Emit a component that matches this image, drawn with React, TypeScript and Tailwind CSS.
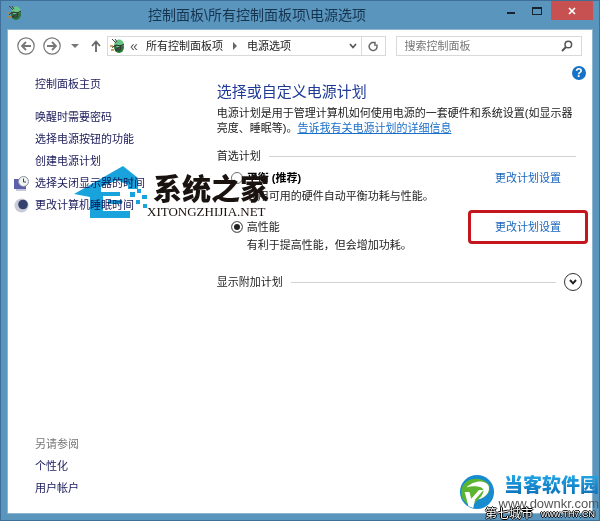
import type { ReactNode } from 'react';

const SIDE_LINKS = ['唤醒时需要密码', '选择电源按钮的功能', '创建电源计划'];

export default function App() {
  return (
    <div className="relative flex min-h-screen flex-col overflow-hidden border border-[#3f6f96] bg-[#5a95be] px-1.5 pb-1.5 font-['Liberation_Sans','Noto_Sans_CJK_SC',sans-serif] text-[11px] leading-4 text-[#222]">
      <TitleBar />
      <div className="flex flex-1 flex-col border border-[#8db5d0] bg-white">
        <Toolbar />
        <div className="flex flex-1">
          <Sidebar />
          <Content />
        </div>
      </div>
      <SiteMark />
      <CornerMark />
    </div>
  );
}

function TitleBar() {
  return (
    <header className="flex h-7 shrink-0 items-start">
      <div className="pt-1">
        <PowerIcon />
      </div>
      <h1 className="flex-1 pt-1 pr-2 text-center text-[14px] leading-5 text-[#15344e]">
        控制面板\所有控制面板项\电源选项
      </h1>
      <button type="button" aria-label="最小化" className="grid h-5 w-6 place-items-center">
        <span className="mt-1 h-0.5 w-2 bg-[#17242f]" />
      </button>
      <button type="button" aria-label="最大化" className="grid h-5 w-7 place-items-center">
        <span className="h-2 w-2.5 border border-t-2 border-[#17242f]" />
      </button>
      <button type="button" aria-label="关闭" className="grid h-[19px] w-[42px] place-items-center bg-[#c75050]">
        <svg viewBox="0 0 8 8" className="size-2" fill="none" stroke="white" strokeWidth="1.7">
          <path d="M1 1 L7 7 M7 1 L1 7" />
        </svg>
      </button>
    </header>
  );
}

function Toolbar() {
  return (
    <div className="flex items-center pt-1.5 pr-2.5 pl-[9px]">
      <button type="button" aria-label="后退">
        <NavArrow d="M14 9 H5 M9 5 L5 9 L9 13" />
      </button>
      <button type="button" aria-label="前进" className="ml-2">
        <NavArrow d="M4 9 H13 M9 5 L13 9 L9 13" />
      </button>
      <button type="button" aria-label="最近浏览的位置" className="ml-2.5">
        <svg viewBox="0 0 8 4" className="h-1 w-2" fill="#777">
          <path d="M0 0 H8 L4 4Z" />
        </svg>
      </button>
      <button type="button" aria-label="上移" className="mr-1.5 ml-3">
        <svg viewBox="0 0 10 12" className="h-3 w-2.5" fill="none" stroke="#666" strokeWidth="1.8">
          <path d="M5 12 V2 M1 6 L5 1.5 L9 6" />
        </svg>
      </button>
      <div className="flex h-5 flex-1 items-center border border-[#d9d9d9] pl-0.5">
        <PowerIcon />
        <span className="w-5 pl-1 text-[14px] leading-4 text-[#555]">«</span>
        <a href="#all">所有控制面板项</a>
        <svg viewBox="0 0 4 8" className="mx-2.5 h-2 w-1" fill="#666">
          <path d="M0 0 L4 4 L0 8Z" />
        </svg>
        <a href="#power">电源选项</a>
        <button type="button" aria-label="历史记录" className="mr-1 ml-auto">
          <svg viewBox="0 0 8 6" className="h-1.5 w-2" fill="none" stroke="#555" strokeWidth="1.7">
            <path d="M1 1 L4 4.5 L7 1" />
          </svg>
        </button>
        <button type="button" aria-label="刷新" className="grid h-full w-6 place-items-center border-l border-[#d9d9d9]">
          <svg viewBox="0 0 12 12" className="size-3" fill="none" stroke="#666" strokeWidth="1.5">
            <path d="M9.5 4.5 A4 4 0 1 1 6.5 2.6 M4.5 2.6 H8 V6" />
          </svg>
        </button>
      </div>
      <div className="ml-2.5 flex h-5 w-[33%] items-center border border-[#d9d9d9] pr-2 pl-2">
        <input
          type="search"
          aria-label="搜索控制面板"
          placeholder="搜索控制面板"
          className="min-w-0 flex-1 outline-none placeholder:text-[#777]"
        />
        <svg viewBox="0 0 12 12" className="size-3" fill="none" stroke="#555" strokeWidth="1.5">
          <circle cx="7.3" cy="4.5" r="3.3" />
          <path d="M5 7 L1 11" strokeWidth="2" />
        </svg>
      </div>
    </div>
  );
}

function Sidebar() {
  return (
    <aside className="flex w-[33%] max-w-64 shrink-0 flex-col pt-5 pb-[17px] pl-1 text-[#20205f]">
      <a href="#home" className="pl-[23px]">
        控制面板主页
      </a>
      <nav className="mt-[17px] flex flex-col gap-1.5">
        {SIDE_LINKS.map((label) => (
          <a key={label} href="#task" className="pl-[23px]">
            {label}
          </a>
        ))}
        <SideIconLink icon={<DisplayClock />}>选择关闭显示器的时间</SideIconLink>
        <SideIconLink icon={<Moon />}>更改计算机睡眠时间</SideIconLink>
      </nav>
      <div className="mt-auto flex flex-col gap-1.5 pl-[23px]">
        <h2 className="text-[#777]">另请参阅</h2>
        <a href="#personal">个性化</a>
        <a href="#accounts">用户帐户</a>
      </div>
    </aside>
  );
}

function SideIconLink({ icon, children }: { icon: ReactNode; children: ReactNode }) {
  return (
    <a href="#task" className="flex items-center gap-1.5 pl-0.5">
      {icon}
      {children}
    </a>
  );
}

function Content() {
  return (
    <main className="flex min-w-0 flex-1 flex-col pr-1 pl-4">
      <button
        type="button"
        aria-label="帮助"
        className="mt-2.5 mr-0.5 size-3.5 shrink-0 self-end rounded-full bg-[#1672c4] text-center text-[12px] leading-3.5 font-bold text-white"
      >
        ?
      </button>
      <h2 className="mt-0.5 text-[15px] leading-5 text-[#1e3a96]">选择或自定义电源计划</h2>
      <p className="mt-1 pr-3 leading-[15px]">
        电源计划是用于管理计算机如何使用电源的一套硬件和系统设置(如显示器亮度、睡眠等)。
        <a href="#more" className="text-[#1a6fc9] underline">
          告诉我有关电源计划的详细信息
        </a>
      </p>
      <fieldset aria-label="首选计划" className="mt-3 pr-2">
        <div className="flex items-center gap-2">
          <span>首选计划</span>
          <span className="mr-1 h-px flex-1 bg-[#d2d2d2]" />
        </div>
        <div className="mt-1.5 flex flex-col gap-[15px]">
          <Plan id="balanced" name="平衡 (推荐)" bold detail="利用可用的硬件自动平衡功耗与性能。" />
          <Plan id="high" name="高性能" checked detail="有利于提高性能，但会增加功耗。" />
        </div>
      </fieldset>
      <div className="mt-5 flex items-center gap-2 pr-1.5">
        <span>显示附加计划</span>
        <span className="h-px flex-1 bg-[#d2d2d2]" />
        <button
          type="button"
          aria-label="显示附加计划"
          className="grid size-[18px] place-items-center rounded-full border border-[#333]"
        >
          <svg viewBox="0 0 8 6" className="h-1.5 w-2" fill="none" stroke="#222" strokeWidth="2">
            <path d="M1 1 L4 4.3 L7 1" />
          </svg>
        </button>
      </div>
    </main>
  );
}

type PlanProps = { id: string; name: string; detail: string; bold?: boolean; checked?: boolean };

function Plan({ id, name, detail, bold, checked }: PlanProps) {
  return (
    <div className="pl-3.5">
      <div className="flex h-4 items-center">
        <input
          id={id}
          type="radio"
          name="plan"
          defaultChecked={checked}
          className="size-3 appearance-none rounded-full border border-[#707070] bg-white checked:bg-[#222] checked:shadow-[inset_0_0_0_2px_white]"
        />
        <label htmlFor={id} className={bold ? 'ml-1 font-bold text-black' : 'ml-1'}>
          {name}
        </label>
        <a
          href="#edit"
          className={`-mr-2 ml-auto rounded-sm border-[3px] px-6 py-1.5 text-[#1a66bd] ${
            checked ? 'border-[#c4161c]' : 'border-transparent'
          }`}
        >
          更改计划设置
        </a>
      </div>
      <p className="mt-0.5 pl-4">{detail}</p>
    </div>
  );
}

function SiteMark() {
  return (
    <div className="pointer-events-none absolute top-[165px] left-[73px] flex items-start">
      <svg viewBox="0 0 75 54" className="h-[54px] w-[75px] mix-blend-multiply" fill="#18a3dc">
        <path d="M0 28 L49 0 L64 12 V23 H54 V19 L43 14 L27 21 V26 H46 V30 H29 V45 H56 V52 H16 V31 Z" />
        <path d="M34 34 H48 V38 H34Z M56 26 H61 V31 H56Z M63 23 H67 V27 H63Z M68 29 H73 V33 H68Z M62 34 H66 V38 H62Z M69 38 H73 V42 H69Z" />
      </svg>
      <div className="-ml-0.5 pt-2 text-[#19120f]">
        <div className="pl-1.5 text-[29px] leading-8 font-black">系统之家</div>
        <div className="-mt-0.5 font-['Liberation_Serif',serif] text-[13px] leading-4">XITONGZHIJIA.NET</div>
      </div>
    </div>
  );
}

function CornerMark() {
  return (
    <div className="pointer-events-none absolute right-0 bottom-0 flex flex-col items-end">
      <div className="flex items-start gap-1">
        <svg viewBox="0 0 38 38" className="size-9">
          <circle cx="19" cy="19" r="18" fill="#168bd0" />
          <path d="M3 24 C-2 3 25 0 32 12 C34 20 28 25 20 27 L14 34 C8 32 5 29 3 24Z" fill="#5cb531" />
          <path d="M8 14 C14 8 26 5 31 12 C34 19 27 26 20 27 C26 22 28 16 23 14 C18 12 12 13 8 14Z" fill="white" />
          <path d="M6 19 H11 L13 26 L21 17 H26 L17 27 L15 36 L10 34Z" fill="white" />
        </svg>
        <div className="flex flex-col items-end">
          <div className="bg-gradient-to-b from-[#25a8e8] to-[#0869b4] bg-clip-text text-[19px] leading-6 font-black text-transparent">
            当客软件园
          </div>
          <div className="text-[13px] leading-3 text-[#555]">www.downkr.com</div>
        </div>
      </div>
      <div className="-mt-0.5 flex gap-2 pr-1 text-[12px] leading-3 text-white text-shadow-[1px_0_0_#000,-1px_0_0_#000,0_1px_0_#000,0_-1px_0_#000]">
        <span>第七城市</span>
        <span className="text-[9px]">www.TH7.CN</span>
      </div>
    </div>
  );
}

function NavArrow({ d }: { d: string }) {
  return (
    <svg viewBox="0 0 18 18" className="size-[18px]" fill="none" stroke="#777" strokeWidth="1.2">
      <circle cx="9" cy="9" r="8.2" />
      <path d={d} strokeWidth="1.8" />
    </svg>
  );
}

function PowerIcon() {
  return (
    <svg viewBox="0 0 16 16" className="size-4">
      <ellipse cx="9" cy="9" rx="5" ry="6" fill="#247537" />
      <ellipse cx="9" cy="5.5" rx="4.5" ry="4" fill="#66c584" />
      <path d="M2 1 L6 5 M5 1 L7 4" stroke="#444" strokeWidth="1" />
      <path d="M2 9.5 L6 7 L11 8 L14 6 M11 8 L10 12 L5 12Z" fill="#555" stroke="#333" strokeWidth="1" />
      <path d="M0 8 H3 M1 12 H4" stroke="#bd852d" strokeWidth="1.3" />
    </svg>
  );
}

function DisplayClock() {
  return (
    <svg viewBox="0 0 15 15" className="size-[15px]">
      <path d="M0 3 H12 V13 H0Z" fill="#5b5fad" />
      <path d="M2 14 H12" stroke="#8b91b8" />
      <circle cx="9.5" cy="5.5" r="5" fill="#f1f3f5" stroke="#8c939d" />
      <path d="M9.5 2.5 V6 H12" fill="none" stroke="#444" />
    </svg>
  );
}

function Moon() {
  return (
    <svg viewBox="0 0 15 15" className="size-[15px]">
      <circle cx="7.5" cy="7.5" r="7" fill="#c9ccd6" />
      <circle cx="9" cy="6.5" r="4.8" fill="#34406e" />
    </svg>
  );
}
